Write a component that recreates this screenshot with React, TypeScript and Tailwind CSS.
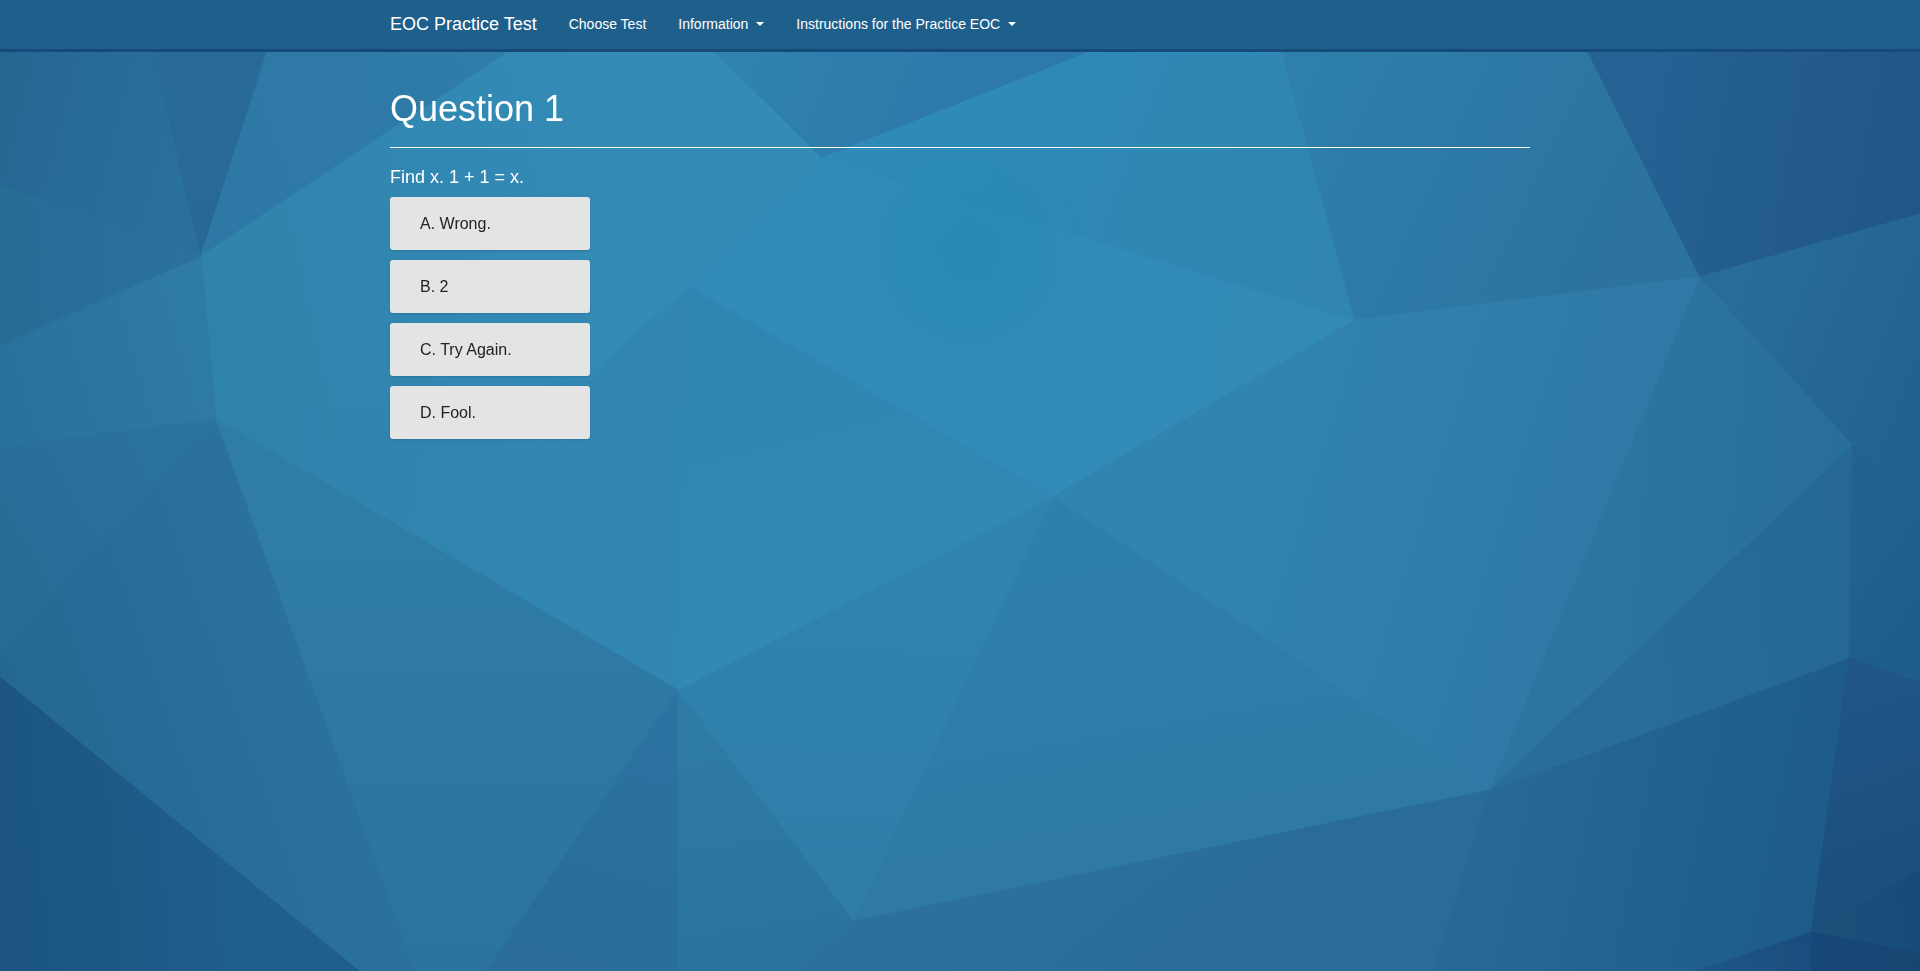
import React from "react";

type Point = [number, number];

interface Facet {
  points: Point[];
  /** Gradient axis: start x, start y, end x, end y */
  axis: [number, number, number, number];
  from: string;
  to: string;
}

const A: Point = [201, 256];
const B: Point = [216, 419];
const C: Point = [822, 158];
const D: Point = [1355, 320];
const E: Point = [1700, 277];
const F: Point = [1853, 445];
const G: Point = [1054, 496];
const H: Point = [678, 690];
const I: Point = [691, 287];
const J: Point = [854, 921];
const K: Point = [1490, 790];
const L: Point = [1849, 658];
const M: Point = [1811, 932];

const facets: Facet[] = [
  { points: [[0, 0], [143, 0], [153, 52], A, [0, 185]], axis: [0, 60, 190, 110], from: "#246690", to: "#2a709d" },
  { points: [[143, 0], [282, 0], [267, 52], A, [153, 52]], axis: [170, 52, 200, 257], from: "#286b99", to: "#286894" },
  { points: [[282, 0], [585, 0], [508, 52], A, [267, 52]], axis: [240, 150, 480, 60], from: "#2e78a5", to: "#2f7ca8" },
  { points: [A, [508, 52], [585, 0], [671, 0], [715, 52], C, I, H, B], axis: [200, 330, 620, 240], from: "#2f83ab", to: "#338bb6" },
  { points: [B, [390, 402], [590, 380], [640, 328], I, H], axis: [215, 420, 600, 480], from: "#2f82aa", to: "#3187b2" },
  { points: [[0, 345], A, B, [0, 447]], axis: [0, 400, 210, 340], from: "#28719b", to: "#2e7ba3" },
  { points: [[0, 185], A, [0, 345]], axis: [0, 250, 200, 240], from: "#266c95", to: "#2b729e" },
  { points: [[0, 447], B, [0, 653]], axis: [0, 540, 215, 420], from: "#266d96", to: "#2c75a1" },
  { points: [[0, 653], B, [416, 971], [359, 971], [0, 677]], axis: [0, 690, 260, 600], from: "#246891", to: "#2a719c" },
  { points: [B, H, [486, 971], [416, 971]], axis: [430, 540, 430, 971], from: "#2f7ca7", to: "#2a749e" },
  { points: [[0, 677], [359, 971], [0, 971]], axis: [0, 880, 230, 860], from: "#1b5480", to: "#205e8b" },
  { points: [H, [678, 971], [486, 971]], axis: [678, 700, 600, 971], from: "#2b73a2", to: "#296d98" },
  { points: [H, J, [797, 971], [678, 971]], axis: [700, 720, 740, 971], from: "#2e7ba6", to: "#2a739f" },
  { points: [H, G, J], axis: [860, 570, 850, 921], from: "#3083b0", to: "#2f7da7" },
  { points: [G, K, J], axis: [1054, 496, 1120, 860], from: "#2e7fac", to: "#2e7aa5" },
  { points: [J, K, [1433, 971], [797, 971]], axis: [1050, 870, 1130, 971], from: "#2c719e", to: "#296c98" },
  { points: [K, L, M, [1696, 971], [1433, 971]], axis: [1470, 830, 1820, 900], from: "#276995", to: "#1e5b88" },
  { points: [I, G, H], axis: [700, 350, 770, 620], from: "#3086b3", to: "#3289b5" },
  { points: [C, D, G, I], axis: [740, 250, 1300, 330], from: "#318cb9", to: "#328bb7" },
  { points: [[671, 0], [1190, 0], [1089, 52], C, [715, 52]], axis: [760, 52, 930, 120], from: "#3081ae", to: "#2d79ab" },
  { points: [[1190, 0], [1271, 0], [1282, 52], D, C, [1089, 52]], axis: [950, 110, 1320, 250], from: "#2e8ab7", to: "#3085b1" },
  { points: [[1271, 0], [1562, 0], [1588, 52], E, D, [1282, 52]], axis: [1300, 90, 1620, 240], from: "#2e7fab", to: "#2c739f" },
  { points: [[1562, 0], [1920, 0], [1920, 214], E, [1588, 52]], axis: [1640, 140, 1920, 190], from: "#256193", to: "#205786" },
  { points: [D, E, K, G], axis: [1250, 430, 1600, 540], from: "#3183b0", to: "#2f79a6" },
  { points: [E, F, K], axis: [1620, 450, 1830, 470], from: "#2c75a1", to: "#287099" },
  { points: [E, [1920, 214], [1920, 508], F], axis: [1740, 300, 1920, 370], from: "#286d99", to: "#23628e" },
  { points: [F, L, K], axis: [1620, 670, 1849, 650], from: "#296e9a", to: "#246893" },
  { points: [F, [1920, 508], [1920, 682], L], axis: [1850, 550, 1920, 600], from: "#236190", to: "#1f5d8a" },
  { points: [L, [1920, 682], [1920, 870], M], axis: [1849, 660, 1910, 840], from: "#205787", to: "#1b4f7e" },
  { points: [M, [1920, 870], [1920, 953]], axis: [1820, 930, 1920, 910], from: "#1b517a", to: "#174a79" },
  { points: [M, [1920, 953], [1920, 971], [1810, 971]], axis: [1811, 940, 1920, 971], from: "#174778", to: "#184672" },
  { points: [[1696, 971], M, [1810, 971]], axis: [1700, 971, 1811, 950], from: "#1e5785", to: "#1a4d7d" },
];

const Backdrop: React.FC = () => (
  <svg
    aria-hidden="true"
    className="fixed inset-0 -z-10 h-full w-full"
    viewBox="0 0 1920 971"
    preserveAspectRatio="xMidYMid slice"
  >
    <defs>
      {facets.map((f, i) => (
        <linearGradient
          key={i}
          id={`facet-${i}`}
          gradientUnits="userSpaceOnUse"
          x1={f.axis[0]}
          y1={f.axis[1]}
          x2={f.axis[2]}
          y2={f.axis[3]}
        >
          <stop offset="0" stopColor={f.from} />
          <stop offset="1" stopColor={f.to} />
        </linearGradient>
      ))}
      <radialGradient id="glow">
        <stop offset="0" stopColor="#2889b5" stopOpacity="0.9" />
        <stop offset="0.4" stopColor="#2889b5" stopOpacity="0.7" />
        <stop offset="1" stopColor="#2889b5" stopOpacity="0" />
      </radialGradient>
    </defs>
    <rect width="1920" height="971" fill="#2e7ba8" />
    {facets.map((f, i) => (
      <polygon
        key={i}
        points={f.points.map((p) => p.join(",")).join(" ")}
        fill={`url(#facet-${i})`}
        stroke={`url(#facet-${i})`}
        strokeWidth="1"
      />
    ))}
    <ellipse cx="970" cy="250" rx="125" ry="130" fill="url(#glow)" />
  </svg>
);

const Caret: React.FC = () => (
  <svg aria-hidden="true" width="8" height="4" viewBox="0 0 8 4" fill="currentColor">
    <path d="M0 0h8L4 4z" />
  </svg>
);

const answers = ["A. Wrong.", "B. 2", "C. Try Again.", "D. Fool."];

export default function App() {
  return (
    <div className="relative isolate min-h-screen font-['Liberation_Sans',Arial,sans-serif] text-white">
      <Backdrop />
      <header className="border-b-3 border-[#164a7a] bg-[#1f5f8b]">
        <nav
          aria-label="Main"
          className="mx-auto flex max-w-[1170px] flex-wrap items-center gap-x-8 px-[15px] text-sm leading-5"
        >
          <a href="#" className="py-[14px] text-lg leading-[21px]">
            EOC Practice Test
          </a>
          <a href="#" className="pt-[13px] pb-[15px]">
            Choose Test
          </a>
          <button type="button" className="flex cursor-pointer items-center gap-2 pt-[13px] pb-[15px]">
            Information
            <Caret />
          </button>
          <button type="button" className="flex cursor-pointer items-center gap-2 pt-[13px] pb-[15px]">
            Instructions for the Practice EOC
            <Caret />
          </button>
        </nav>
      </header>

      <main className="mx-auto max-w-[1170px] px-[15px] pt-[37px]">
        <h1 className="border-b border-white pb-[18px] text-4xl leading-10">Question 1</h1>
        <h2 className="mt-[19px] text-lg leading-5">Find x. 1 + 1 = x.</h2>
        <div className="mt-2.5 flex flex-col items-start gap-2.5">
          {answers.map((answer) => (
            <button
              key={answer}
              type="button"
              className="w-[200px] cursor-pointer rounded-[3px] bg-[#e4e4e4] px-[30px] py-[15px] text-left text-base leading-[23px] text-[#222222] shadow-[0_1px_2px_rgba(0,0,0,0.12)]"
            >
              {answer}
            </button>
          ))}
        </div>
      </main>
    </div>
  );
}
